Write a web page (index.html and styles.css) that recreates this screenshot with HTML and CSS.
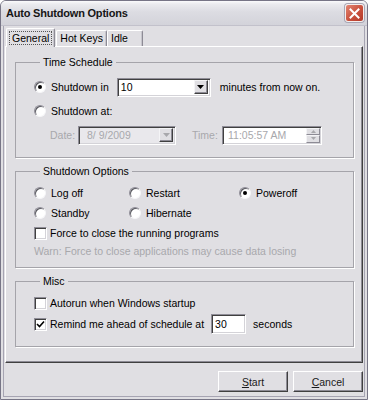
FILE: index.html
```html
<!DOCTYPE html>
<html lang="en">
<head>
    <meta charset="UTF-8">
    <meta name="viewport" content="width=device-width, initial-scale=1.0">
    <title>Auto Shutdown Options</title>
    <link rel="stylesheet" href="styles.css">
</head>
<body>
    <div class="window">
        <div class="titlebar">
            <span class="title">Auto Shutdown Options</span>
            <span class="close">
                <svg width="11" height="11" viewBox="0 0 11 11"><path d="M1.5 1.5l8 8M9.5 1.5l-8 8" stroke="#fff" stroke-width="2" stroke-linecap="square"/></svg>
            </span>
        </div>
        <div class="frame">
            <div class="tabs">
                <div class="tab active"><span class="focus">General</span></div>
                <div class="tab">Hot Keys</div>
                <div class="tab">Idle</div>
            </div>
            <div class="panel">
                <fieldset class="group group-time">
                    <legend>Time Schedule</legend>
                    <div class="row row-tall">
                        <span class="radio checked"></span>
                        <span class="lbl lbl-in">Shutdown in</span>
                        <div class="field combo">
                            <span class="val">10</span>
                            <span class="drop"><svg width="7" height="4" viewBox="0 0 7 4"><path d="M0 0h7L3.5 4z" fill="#000"/></svg></span>
                        </div>
                        <span class="lbl lbl-after">minutes from now on.</span>
                    </div>
                    <div class="row row-tall">
                        <span class="radio"></span>
                        <span class="lbl">Shutdown at:</span>
                    </div>
                    <div class="row row-tall row-date">
                        <span class="lbl dim lbl-date">Date:</span>
                        <div class="field datebox">
                            <span class="val dim">8/ 9/2009</span>
                            <span class="drop off"><svg width="7" height="4" viewBox="0 0 7 4"><path d="M0 0h7L3.5 4z" fill="#a8a8ac"/></svg></span>
                        </div>
                        <span class="lbl dim lbl-time">Time:</span>
                        <div class="field timebox">
                            <span class="val dim">11:05:57 AM</span>
                            <span class="spin">
                                <span class="spin-btn"><svg width="5" height="3" viewBox="0 0 5 3"><path d="M2.5 0L5 3H0z" fill="#a8a8ac"/></svg></span>
                                <span class="spin-btn"><svg width="5" height="3" viewBox="0 0 5 3"><path d="M0 0h5L2.5 3z" fill="#a8a8ac"/></svg></span>
                            </span>
                        </div>
                    </div>
                </fieldset>

                <fieldset class="group group-options">
                    <legend>Shutdown Options</legend>
                    <div class="row row-grid">
                        <div class="opt"><span class="radio"></span><span class="lbl">Log off</span></div>
                        <div class="opt"><span class="radio"></span><span class="lbl">Restart</span></div>
                        <div class="opt"><span class="radio checked"></span><span class="lbl">Poweroff</span></div>
                    </div>
                    <div class="row row-grid">
                        <div class="opt"><span class="radio"></span><span class="lbl">Standby</span></div>
                        <div class="opt"><span class="radio"></span><span class="lbl">Hibernate</span></div>
                    </div>
                    <div class="row">
                        <span class="check"></span>
                        <span class="lbl">Force to close the running programs</span>
                    </div>
                    <div class="row row-warn">
                        <span class="warn">Warn: Force to close applications may cause data losing</span>
                    </div>
                </fieldset>

                <fieldset class="group group-misc">
                    <legend>Misc</legend>
                    <div class="row">
                        <span class="check"></span>
                        <span class="lbl">Autorun when Windows startup</span>
                    </div>
                    <div class="row row-remind">
                        <span class="check checked"><svg width="9" height="9" viewBox="0 0 9 9"><path d="M1 4l2.5 2.5L8 1.5" stroke="#000" stroke-width="1.6" fill="none"/></svg></span>
                        <span class="lbl">Remind me ahead of schedule at</span>
                        <div class="field secbox"><span class="val">30</span></div>
                        <span class="lbl">seconds</span>
                    </div>
                </fieldset>
            </div>
            <div class="buttons">
                <button class="btn"><u>S</u>tart</button>
                <button class="btn"><u>C</u>ancel</button>
            </div>
        </div>
    </div>
</body>
</html>
```

FILE: styles.css
```css
body{
    margin: 0;
    font-family: "Liberation Sans", Arial, sans-serif;
    font-size: 10.5px;
    color: #000;
    background: #fff;
}
.window{
    width: 368px;
    height: 400px;
    box-sizing: border-box;
    border: 1px solid #777586;
    border-radius: 6px 6px 0 0;
    background: #e0dfe3;
    display: flex;
    flex-direction: column;
    overflow: hidden;
}
.titlebar{
    height: 24px;
    flex: none;
    display: flex;
    align-items: center;
    justify-content: space-between;
    padding: 0 3px 0 5px;
    background: linear-gradient(#fbfbfc 0, #ebebef 3px, #dcdce2 45%, #d3d3da 100%);
    border-bottom: 1px solid #c2c1cb;
}
.title{
    font-weight: bold;
    font-size: 11px;
    letter-spacing: -0.2px;
    color: #161616;
}
.close{
    width: 19px;
    height: 18px;
    box-sizing: border-box;
    border: 1px solid #f4efee;
    border-radius: 3px;
    background: linear-gradient(135deg, #e28673, #c9503d 55%, #b33a2a);
    display: flex;
    align-items: center;
    justify-content: center;
    box-shadow: 0 0 0 1px #a8a6b4;
}
.frame{
    flex: 1;
    display: flex;
    flex-direction: column;
    margin: 0 2px 2px;
    border: 1px solid #a6a4b2;
    border-top: 0;
    padding: 2px 0 0 1px;
}

/* tabs */
.tabs{
    display: flex;
    align-items: flex-end;
    height: 18px;
    padding-left: 3px;
    position: relative;
    z-index: 1;
}
.tab{
    height: 16px;
    min-width: 36px;
    box-sizing: border-box;
    padding: 0 3px;
    line-height: 15px;
    border: 1px solid #fff;
    border-right-color: #8d8b95;
    border-bottom: 0;
    border-radius: 2px 2px 0 0;
    box-shadow: inset -1px 0 0 #c6c5cc;
}
.tab.active{
    height: 19px;
    margin: 0 1px -1px -2px;
    padding: 2px 2px 0;
    background: #e0dfe3;
}
.focus{
    display: block;
    padding: 0 2px;
    line-height: 12px;
    border: 1px dotted #555;
}

/* panel */
.panel{
    width: 358px;
    height: 317px;
    box-sizing: border-box;
    border: 1px solid #fff;
    border-right-color: #404040;
    border-bottom-color: #404040;
    box-shadow: inset -1px -1px 0 #8d8b95;
    padding: 8px 8px 0 9px;
}
.group{
    margin: 0 0 6px;
    padding: 0 0 0 18px;
    border: 1px solid #a5a4aa;
    box-shadow: 1px 1px 0 #fff;
    min-width: 0;
}
.group legend{
    margin-left: 6px;
    padding: 0 3px;
    line-height: 14px;
}
.group-time{
    padding-top: 6px;
    padding-bottom: 10px;
}
.group-options{
    padding-top: 5px;
    padding-bottom: 8px;
}
.group-misc{
    padding-top: 5px;
    padding-bottom: 11px;
}
.row{
    display: flex;
    align-items: center;
    height: 20px;
}
.row-tall{
    height: 24px;
}
.row-grid{
    display: grid;
    grid-template-columns: 95px 110px auto;
}
.row-warn{
    height: 16px;
}
.row-remind{
    height: 22px;
}
.opt{
    display: flex;
    align-items: center;
}
.lbl{
    white-space: nowrap;
}
.dim{
    color: #a8a8ac;
}
.warn{
    color: #a8a8ac;
    white-space: nowrap;
}

/* radio + check */
.radio{
    width: 12px;
    height: 12px;
    box-sizing: border-box;
    border-radius: 50%;
    border: 1px solid;
    border-color: #8f8d97 #f6f6f8 #f6f6f8 #8f8d97;
    box-shadow: inset 1px 1px 0 #5a5a60;
    background: #fff;
    margin-right: 5px;
    display: flex;
    align-items: center;
    justify-content: center;
    flex: none;
}
.radio.checked::after{
    content: "";
    width: 4px;
    height: 4px;
    border-radius: 50%;
    background: #000;
}
.check{
    width: 13px;
    height: 13px;
    box-sizing: border-box;
    border: 1px solid;
    border-color: #8f8d97 #fff #fff #8f8d97;
    box-shadow: inset 1px 1px 0 #404040, inset -1px -1px 0 #d4d3d8;
    background: #fff;
    margin-right: 3px;
    display: flex;
    align-items: center;
    justify-content: center;
    flex: none;
}

/* fields */
.field{
    box-sizing: border-box;
    height: 19px;
    border: 1px solid;
    border-color: #8f8d97 #fff #fff #8f8d97;
    box-shadow: inset 1px 1px 0 #404040, inset -1px -1px 0 #d4d3d8;
    background: #fff;
    display: flex;
    align-items: center;
    padding: 2px;
}
.val{
    flex: 1;
    padding-left: 1px;
    white-space: nowrap;
}
.drop{
    width: 14px;
    height: 14px;
    box-sizing: border-box;
    background: #e0dfe3;
    border: 1px solid;
    border-color: #f4f4f6 #404040 #404040 #f4f4f6;
    box-shadow: inset -1px -1px 0 #8d8b95;
    display: flex;
    align-items: center;
    justify-content: center;
}
.combo{
    width: 94px;
    margin-left: 8px;
}
.lbl-after{
    margin-left: 9px;
}
.row-date{
    padding-left: 16px;
}
.lbl-date{
    width: 28px;
}
.datebox{
    width: 98px;
    background: #e9e8ec;
}
.datebox .val{
    padding-left: 6px;
}
.lbl-time{
    margin-left: 16px;
    width: 30px;
}
.timebox{
    width: 100px;
    padding-right: 1px;
}
.timebox .val{
    padding-left: 3px;
}
.spin{
    display: flex;
    flex-direction: column;
    width: 14px;
    height: 15px;
}
.spin-btn{
    flex: 1;
    background: #e0dfe3;
    border: 1px solid;
    border-color: #f4f4f6 #8d8b95 #8d8b95 #f4f4f6;
    display: flex;
    align-items: center;
    justify-content: center;
}
.secbox{
    width: 35px;
    height: 20px;
    margin-left: 7px;
    margin-right: 7px;
}

/* buttons */
.buttons{
    display: flex;
    justify-content: flex-end;
    gap: 5px;
    padding: 8px 0 0;
    width: 358px;
}
.btn{
    width: 70px;
    height: 21px;
    font-family: "Liberation Sans", Arial, sans-serif;
    font-size: 10.5px;
    color: #1a1a1a;
    background: #e0dfe3;
    border: 1px solid;
    border-color: #fff #404040 #404040 #fff;
    box-shadow: inset -1px -1px 0 #8d8b95;
    padding: 0;
}
```
